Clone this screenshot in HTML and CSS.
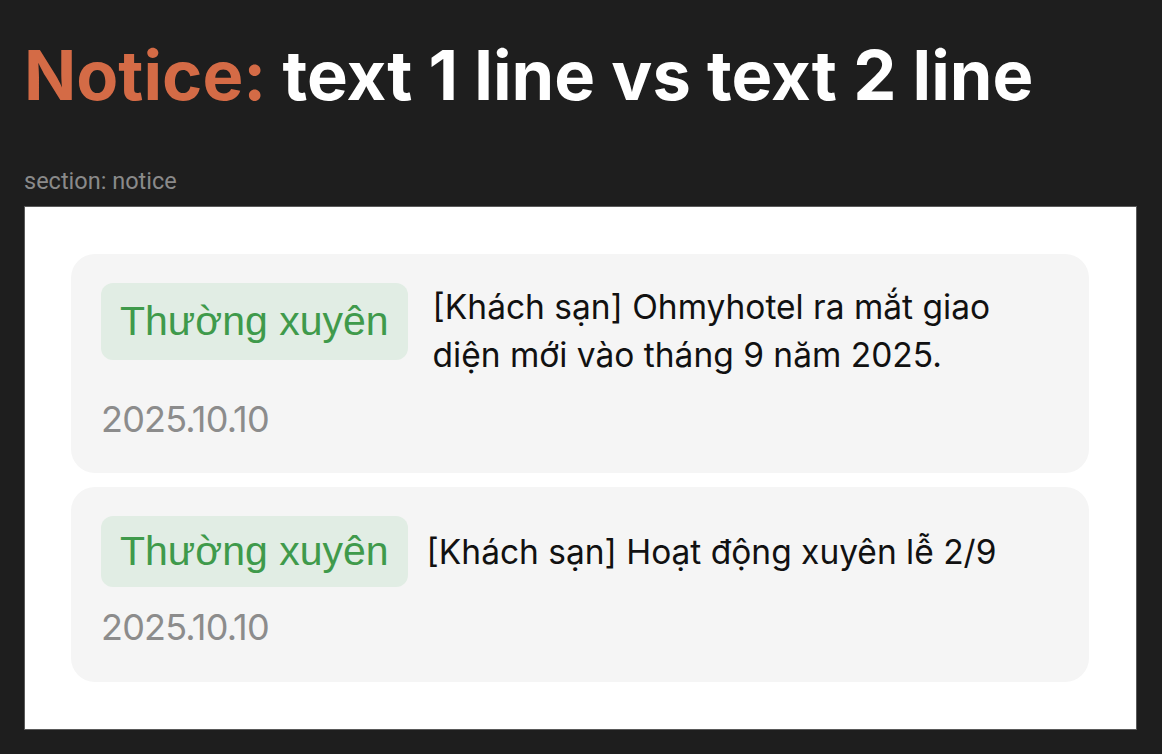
FILE: index.html
```html
<!DOCTYPE html>
<html lang="vi">
<head>
<meta charset="utf-8">
<title>Notice</title>
<link rel="stylesheet" href="styles.css">
</head>
<body>
<h1 class="page-title"><span class="accent">Notice:</span> text 1 line vs text 2 line</h1>
<div class="section-label">section: notice</div>
<section class="frame">
  <article class="notice notice--multi">
    <div class="notice-row">
      <span class="badge">Thường xuyên</span>
      <p class="notice-text">[Khách sạn] Ohmyhotel ra mắt giao diện mới vào tháng 9 năm 2025.</p>
    </div>
    <div class="notice-date">2025.10.10</div>
  </article>
  <article class="notice notice--single">
    <div class="notice-row">
      <span class="badge">Thường xuyên</span>
      <p class="notice-text">[Khách sạn] Hoạt động xuyên lễ 2/9</p>
    </div>
    <div class="notice-date">2025.10.10</div>
  </article>
</section>
</body>
</html>
```

FILE: styles.css
```css
* { box-sizing: border-box; }
html, body { margin: 0; padding: 0; }
body {
  background: #1e1e1e;
  padding: 34px 24px 0 24px;
  font-family: Inter, "Liberation Sans", sans-serif;
}
.page-title {
  margin: 0;
  font-size: 68.6px;
  font-weight: 700;
  line-height: 84px;
  color: #ffffff;
  letter-spacing: 0;
}
.accent { color: #d46b46; }
.section-label {
  margin-top: 49px;
  font-family: Roboto, "Liberation Sans", sans-serif;
  font-size: 23.5px;
  line-height: 28px;
  color: #8a8a8a;
}
.frame {
  margin-top: 11px;
  width: 1113px;
  background: #ffffff;
  border: 1px solid #5a5a5a;
  padding: 47px 47px 47px 46px;
  display: flex;
  flex-direction: column;
  gap: 14px;
}
.notice {
  background: #f5f5f5;
  border-radius: 24px;
  padding: 29px 30px 34px 30px;
  display: flex;
  flex-direction: column;
  gap: 20px;
  font-family: Inter, "Noto Sans", sans-serif;
}
.notice-row {
  display: flex;
  align-items: flex-start;
  gap: 25px;
}
.notice--single .notice-row { align-items: center; gap: 19px; }
.notice--single { padding-bottom: 35px; }
.badge {
  flex: none;
  background: #e1ede4;
  color: #3f9a4b;
  border-radius: 12px;
  font-family: "Liberation Sans", Arial, sans-serif;
  font-size: 41px;
  line-height: 47px;
  padding: 15px 19px 15px 19px;
}
.notice--single .badge { padding: 12px 19px 12px 19px; }
.notice-text {
  margin: 0;
  font-size: 33.5px;
  line-height: 48px;
  color: #111111;
  max-width: 600px;
}
.notice-date {
  font-size: 36px;
  line-height: 40px;
  color: #8c8c8c;
  letter-spacing: -0.8px;
}
```
